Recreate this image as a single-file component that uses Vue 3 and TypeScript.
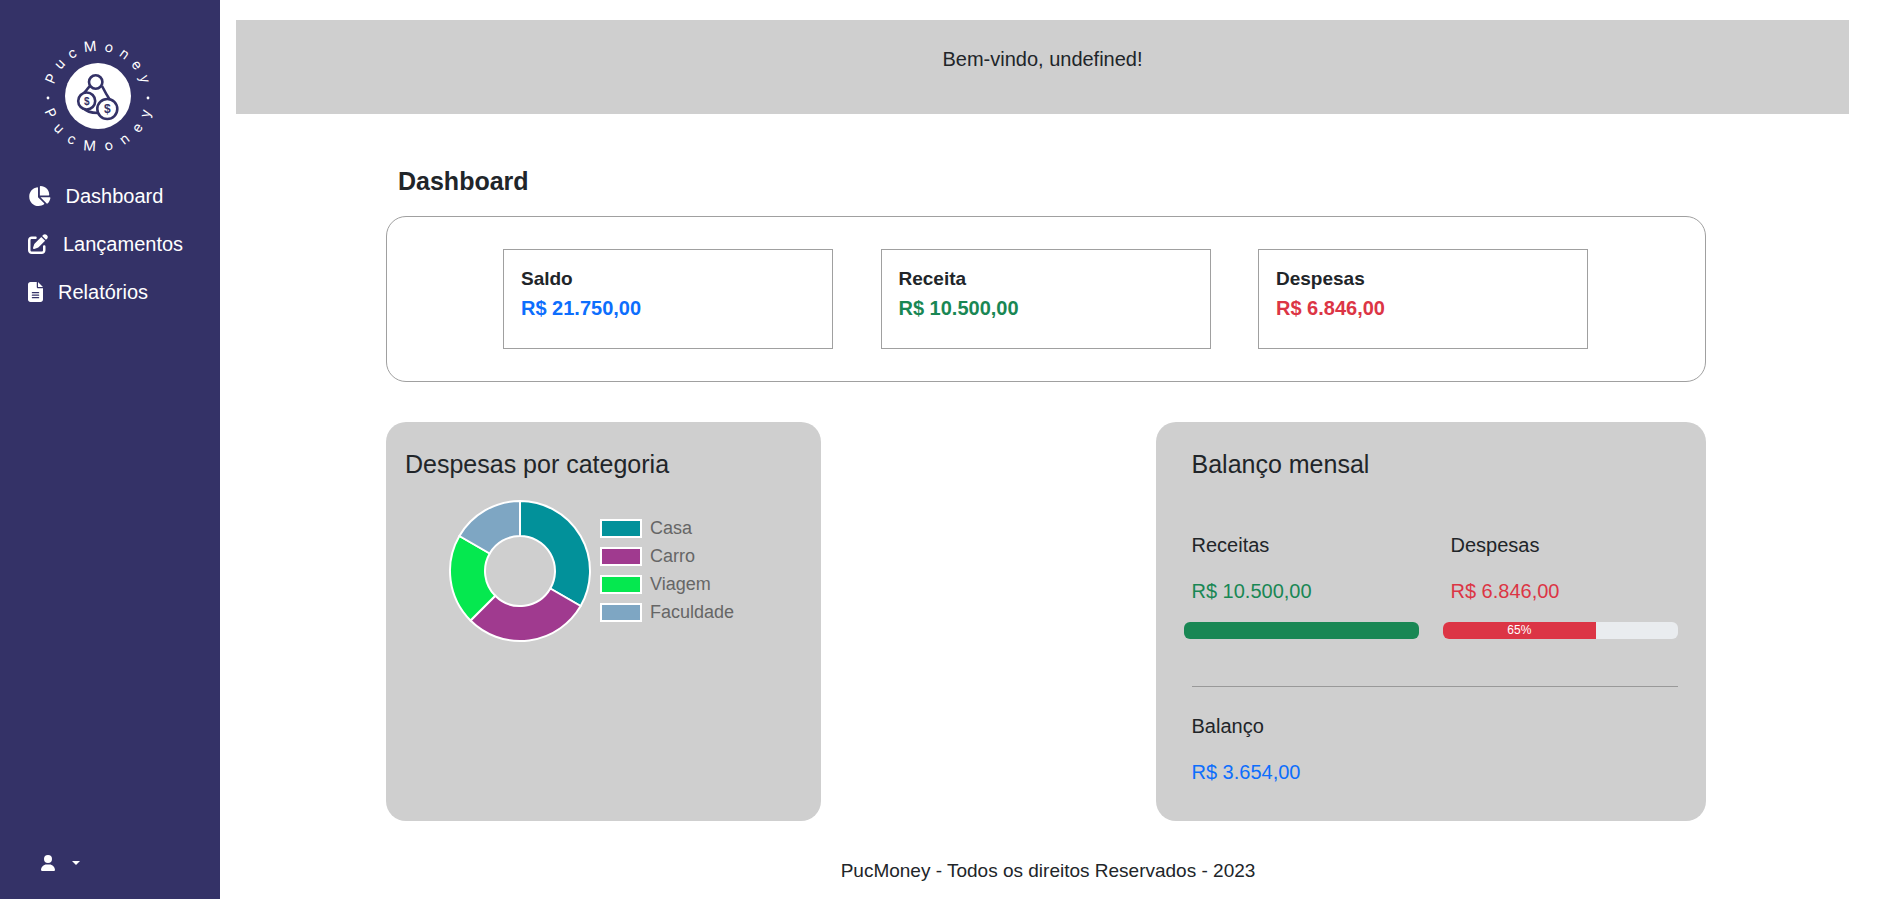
<template>
  <div class="page">
    <aside class="sidebar">
      <svg class="logo" viewBox="0 0 140 140" width="140" height="140">
        <defs>
          <path id="arcTop" d="M 25 70 A 45 45 0 0 1 115 70" />
          <path id="arcBottom" d="M 15 70 A 55 55 0 0 0 125 70" />
        </defs>
        <circle cx="70" cy="70" r="33" fill="#fff" />
        <text class="ring ring_top"><textPath href="#arcTop" startOffset="52%" text-anchor="middle">PucMoney</textPath></text>
        <text class="ring ring_bottom"><textPath href="#arcBottom" startOffset="53%" text-anchor="middle">PucMoney</textPath></text>
        <circle cx="20" cy="72" r="1.4" fill="#fff" />
        <circle cx="120" cy="72" r="1.4" fill="#fff" />
        <g fill="none" stroke="#343267" stroke-width="2.6">
          <circle cx="67.7" cy="56" r="6.7" />
          <path d="M62 60 C59 63 58 65 56 67 M74 60 C76 64 78 68 82 74 M55 81 C58 86 63 87 70 87" />
          <circle cx="58.7" cy="75" r="8.5" fill="#fff" />
          <circle cx="79.3" cy="83" r="10" fill="#fff" />
        </g>
        <text class="coin" x="58.7" y="78.5" text-anchor="middle" font-size="10">$</text>
        <text class="coin" x="79.3" y="87" text-anchor="middle" font-size="12">$</text>
      </svg>

      <nav class="menu">
        <a class="menu_item">
          <svg class="icon" viewBox="0 0 576 512" height="20"><path d="M304 240V16.6c0-9 7-16.6 16-16.6C443.7 0 544 100.3 544 224c0 9-7.6 16-16.6 16H304zM32 272C32 150.7 122.1 50.3 239 34.3c9.2-1.3 17 6.1 17 15.4V288L412.5 444.5c6.7 6.7 6.2 17.7-1.5 23.1C371.8 495.6 323.8 512 272 512C139.5 512 32 404.6 32 272zm526.4 16c9.3 0 16.6 7.8 15.4 17c-7.7 55.9-34.6 105.6-73.9 142.3c-6 5.6-15.4 5.2-21.2-.7L320 288H558.4z" /></svg>
          Dashboard
        </a>
        <a class="menu_item">
          <svg class="icon" viewBox="0 0 512 512" height="20"><path d="M471.6 21.7c-21.9-21.9-57.3-21.9-79.2 0L362.3 51.7l97.9 97.9 30.1-30.1c21.9-21.9 21.9-57.3 0-79.2L471.6 21.7zm-299.2 220c-6.1 6.1-10.8 13.6-13.5 21.9l-29.6 88.8c-2.9 8.6-.6 18.1 5.8 24.6s15.9 8.7 24.6 5.8l88.8-29.6c8.2-2.7 15.7-7.4 21.9-13.5L437.7 172.3 339.7 74.3 172.4 241.7zM96 64C43 64 0 107 0 160V416c0 53 43 96 96 96H352c53 0 96-43 96-96V320c0-17.7-14.3-32-32-32s-32 14.3-32 32v96c0 17.7-14.3 32-32 32H96c-17.7 0-32-14.3-32-32V160c0-17.7 14.3-32 32-32h96c17.7 0 32-14.3 32-32s-14.3-32-32-32H96z" /></svg>
          Lançamentos
        </a>
        <a class="menu_item">
          <svg class="icon" viewBox="0 0 384 512" height="20"><path d="M64 0C28.7 0 0 28.7 0 64V448c0 35.3 28.7 64 64 64H320c35.3 0 64-28.7 64-64V160H256c-17.7 0-32-14.3-32-32V0H64zM256 0V128H384L256 0zM112 256H272c8.8 0 16 7.2 16 16s-7.2 16-16 16H112c-8.8 0-16-7.2-16-16s7.2-16 16-16zm0 64H272c8.8 0 16 7.2 16 16s-7.2 16-16 16H112c-8.8 0-16-7.2-16-16s7.2-16 16-16zm0 64H272c8.8 0 16 7.2 16 16s-7.2 16-16 16H112c-8.8 0-16-7.2-16-16s7.2-16 16-16z" /></svg>
          Relatórios
        </a>
      </nav>

      <div class="user">
        <svg viewBox="0 0 448 512" height="16" fill="#fff"><path d="M224 256A128 128 0 1 0 224 0a128 128 0 1 0 0 256zm-45.7 48C79.8 304 0 383.8 0 482.3C0 498.7 13.3 512 29.7 512H418.3c16.4 0 29.7-13.3 29.7-29.7C448 383.8 368.2 304 269.7 304H178.3z" /></svg>
        <span class="caret"></span>
      </div>
    </aside>

    <main class="main">
      <header class="welcome">Bem-vindo, undefined!</header>

      <section class="content">
        <h1 class="title">Dashboard</h1>

        <div class="summary">
          <div v-for="card in cards" :key="card.label" class="card">
            <div class="card_label">{{ card.label }}</div>
            <div class="card_value" :class="card.color">{{ card.value }}</div>
          </div>
        </div>

        <div class="panels">
          <div class="panel panel_left">
            <h2 class="panel_title">Despesas por categoria</h2>
            <div class="chart">
              <svg width="144" height="144" viewBox="-72 -72 144 144">
                <path v-for="s in slices" :key="s.name" :d="s.d" :fill="s.color" stroke="#fff" stroke-width="2" />
              </svg>
              <ul class="legend">
                <li v-for="s in slices" :key="s.name">
                  <span class="swatch" :style="{ background: s.color }"></span>{{ s.name }}
                </li>
              </ul>
            </div>
          </div>

          <div class="panel panel_right">
            <h2 class="panel_title balance_title">Balanço mensal</h2>
            <div class="columns">
              <div>
                <div class="label">Receitas</div>
                <div class="amount green">R$ 10.500,00</div>
                <div class="progress"><div class="bar bg_green" style="width: 100%"></div></div>
              </div>
              <div>
                <div class="label">Despesas</div>
                <div class="amount red">R$ 6.846,00</div>
                <div class="progress"><div class="bar bg_red" style="width: 65%">65%</div></div>
              </div>
            </div>
            <hr class="divider" />
            <div class="label">Balanço</div>
            <div class="amount blue">R$ 3.654,00</div>
          </div>
        </div>

        <footer class="footer">PucMoney - Todos os direitos Reservados - 2023</footer>
      </section>
    </main>
  </div>
</template>

<script setup lang="ts">
const cards = [
  { label: 'Saldo', value: 'R$ 21.750,00', color: 'blue' },
  { label: 'Receita', value: 'R$ 10.500,00', color: 'green' },
  { label: 'Despesas', value: 'R$ 6.846,00', color: 'red' },
];

const categories = [
  { name: 'Casa', deg: 120, color: '#02919a' },
  { name: 'Carro', deg: 105, color: '#a03a8f' },
  { name: 'Viagem', deg: 75, color: '#05e84f' },
  { name: 'Faculdade', deg: 60, color: '#7ea6c3' },
];

const point = (r: number, deg: number) => {
  const a = ((deg - 90) * Math.PI) / 180;
  return `${(r * Math.cos(a)).toFixed(2)} ${(r * Math.sin(a)).toFixed(2)}`;
};

let start = 0;
const slices = categories.map((c) => {
  const end = start + c.deg;
  const large = c.deg > 180 ? 1 : 0;
  const d = `M ${point(70, start)} A 70 70 0 ${large} 1 ${point(70, end)} L ${point(35, end)} A 35 35 0 ${large} 0 ${point(35, start)} Z`;
  start = end;
  return { ...c, d };
});
</script>

<style scoped>
.page {
  display: flex;
  height: 899px;
  overflow: hidden;
  font-family: "Liberation Sans", Arial, sans-serif;
  color: #212529;
  background: #fff;
}

.sidebar {
  width: 220px;
  flex-shrink: 0;
  display: flex;
  flex-direction: column;
  background: #343267;
}

.logo {
  margin: 26px 0 0 28px;
  display: block;
}

.ring {
  font-family: Inter, sans-serif;
  font-size: 14px;
  fill: #fff;
}

.ring_top { letter-spacing: 6.8px; }
.ring_bottom { letter-spacing: 10.3px; }

.coin {
  font-family: "Liberation Sans", sans-serif;
  font-weight: 700;
  fill: #343267;
}

.menu {
  display: flex;
  flex-direction: column;
  gap: 12px;
  margin-top: 12px;
  padding-left: 28px;
}

.menu_item {
  display: flex;
  align-items: center;
  height: 36px;
  color: #fff;
  font-size: 20px;
}

.icon {
  fill: #fff;
  margin-right: 15px;
}

.user {
  margin-top: auto;
  margin-bottom: 28px;
  margin-left: 41px;
  display: flex;
  align-items: center;
  gap: 17px;
}

.caret {
  width: 0;
  height: 0;
  border-top: 4.8px solid #fff;
  border-left: 4.8px solid transparent;
  border-right: 4.8px solid transparent;
}

.main {
  flex: 1;
  padding: 20px 32px 0 16px;
}

.welcome {
  height: 94px;
  display: flex;
  align-items: center;
  justify-content: center;
  padding-bottom: 15px;
  box-sizing: border-box;
  background: #cfcfcf;
  font-size: 20px;
}

.content {
  width: 1320px;
  margin-left: 150px;
}

.title {
  margin: 53px 0 20px 12px;
  font-size: 25px;
  line-height: 29px;
  font-weight: 700;
}

.summary {
  height: 166px;
  box-sizing: border-box;
  display: flex;
  gap: 47.5px;
  padding: 32px 0 0 116px;
  border: 1px solid #a0a0a0;
  border-radius: 20px;
}

.card {
  width: 330px;
  height: 100px;
  box-sizing: border-box;
  padding: 16px 17px;
  border: 1px solid #a0a0a0;
}

.card_label {
  font-size: 19px;
  font-weight: 700;
  line-height: 26px;
}

.card_value {
  font-size: 20px;
  font-weight: 700;
  line-height: 32px;
}

.blue { color: #0d6efd; }
.green { color: #198754; }
.red { color: #dc3545; }

.panels {
  display: flex;
  justify-content: space-between;
  margin-top: 40px;
}

.panel {
  height: 399px;
  box-sizing: border-box;
  background: #cfcfcf;
  border-radius: 20px;
}

.panel_left {
  width: 435px;
  padding: 28px 19px;
}

.panel_right {
  width: 550px;
  padding: 28px 28px 0;
}

.panel_title {
  margin: 0;
  font-size: 25px;
  font-weight: 400;
  line-height: 29px;
}

.balance_title {
  margin-left: 7.5px;
}

.chart {
  display: flex;
  align-items: center;
  margin: 20px 0 0 43px;
}

.legend {
  list-style: none;
  margin: 0 0 2px 8px;
  padding: 0;
  display: flex;
  flex-direction: column;
  gap: 8px;
  color: #666;
  font-size: 18px;
}

.legend li {
  display: flex;
  align-items: center;
  height: 20px;
}

.swatch {
  width: 38px;
  height: 15px;
  margin-right: 8px;
  border: 2px solid #fff;
}

.columns {
  display: grid;
  grid-template-columns: 235px 235px;
  gap: 24px;
  margin-top: 54px;
}

.label {
  margin-left: 7.5px;
  font-size: 20px;
  line-height: 24px;
}

.amount {
  margin: 22px 0 0 7.5px;
  font-size: 20px;
  line-height: 24px;
}

.progress {
  display: flex;
  height: 17px;
  margin-top: 19px;
  overflow: hidden;
  border-radius: 6px;
  background: #e9ecef;
}

.bar {
  color: #fff;
  font-size: 12px;
  line-height: 17px;
  text-align: center;
}

.bg_green { background: #198754; }
.bg_red { background: #dc3545; }

.divider {
  margin: 47px 0 27px 8px;
  border: 0;
  border-top: 1px solid #999;
}

.footer {
  margin-top: 38px;
  padding-left: 4px;
  text-align: center;
  font-size: 19px;
  line-height: 24px;
}
</style>

<style>
html, body {
  margin: 0;
  overflow: hidden;
}
</style>
